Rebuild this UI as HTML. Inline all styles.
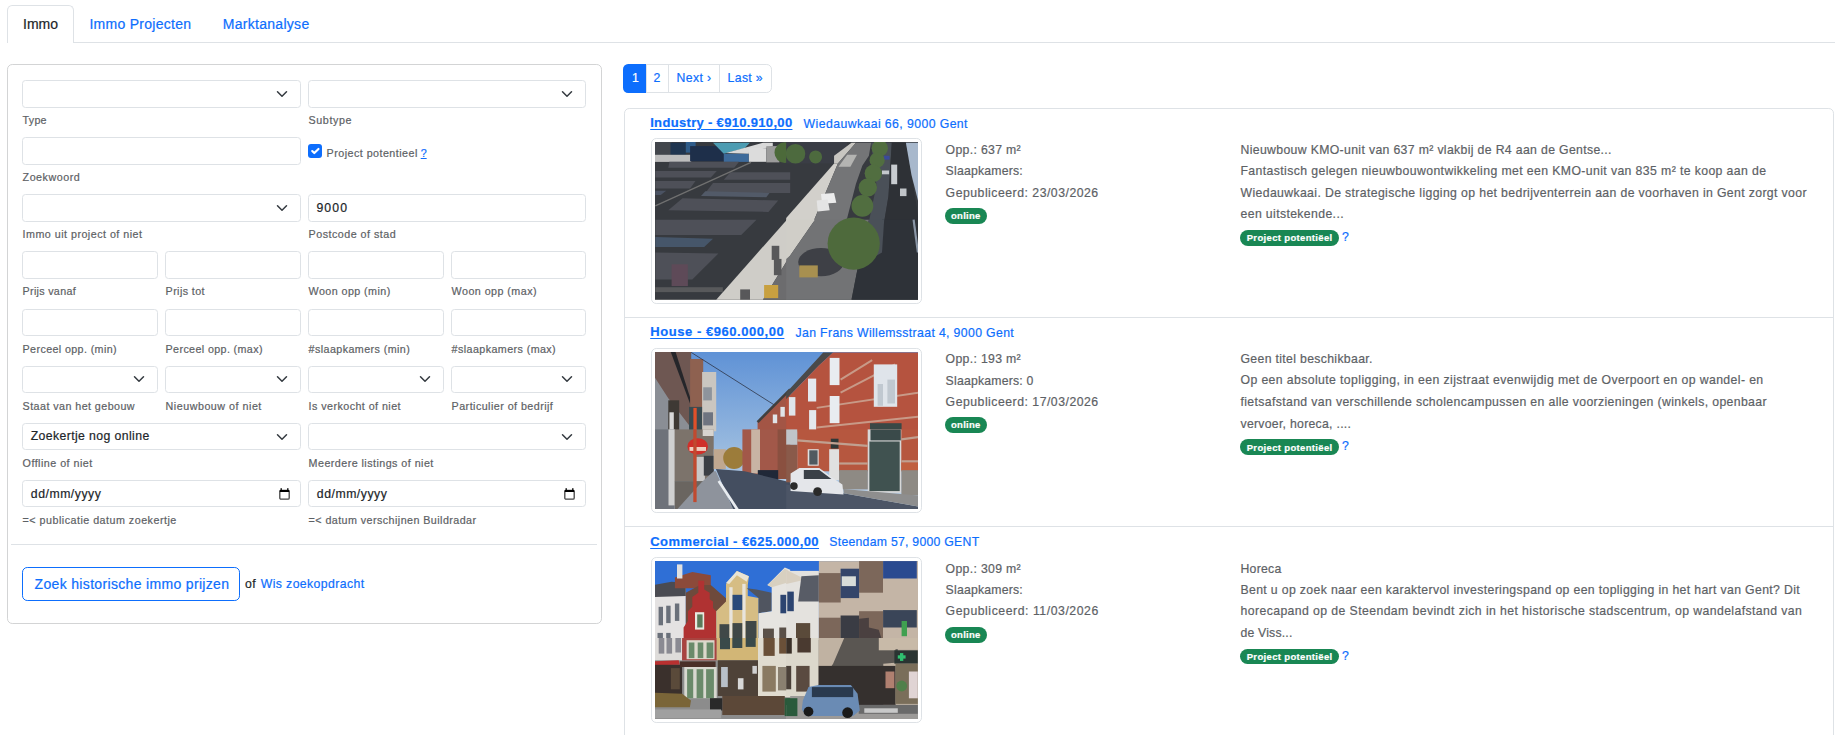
<!DOCTYPE html><html><head><meta charset="utf-8"><style>*{margin:0;padding:0;box-sizing:border-box}
html,body{width:1839px;height:735px;overflow:hidden;background:#fff;font-family:"Liberation Sans",sans-serif}
.t{position:absolute;white-space:nowrap;-webkit-text-stroke:0.2px currentColor}
.b{position:absolute}
.img{overflow:hidden;background:#888}
</style></head><body>
<div class="b" style="left:73.00px;top:42.00px;width:1761.60px;height:1.00px;background:#dee2e6"></div>
<div class="b" style="left:7.00px;top:5.00px;width:66.50px;height:38.00px;border:1px solid #dee2e6;border-bottom:none;border-radius:5.25px 5.25px 0 0;background:#fff"></div>
<div class="t" style="left:23.00px;top:16.10px;font-size:14px;line-height:16.100px;color:#212529;">Immo</div>
<div class="t" style="left:89.40px;top:15.90px;font-size:14px;line-height:16.100px;color:#0d6efd;letter-spacing:0.281px;">Immo Projecten</div>
<div class="t" style="left:222.70px;top:15.90px;font-size:14px;line-height:16.100px;color:#0d6efd;letter-spacing:0.295px;">Marktanalyse</div>
<div class="b" style="left:7.00px;top:64.00px;width:594.80px;height:559.60px;border:1px solid #d3d4d5;border-radius:5.25px"></div>
<div class="b" style="left:22.00px;top:80.00px;width:278.50px;height:27.50px;border:1px solid #dee2e6;border-radius:3.5px;background:#fff"></div>
<svg class="b" style="left:276.00px;top:87.75px" width="12" height="12" viewBox="0 0 16 16"><path d="M2 5l6 6 6-6" fill="none" stroke="#343a40" stroke-width="2" stroke-linecap="round" stroke-linejoin="round"/></svg>
<div class="t" style="left:22.60px;top:114.02px;font-size:10.72px;line-height:12.328px;color:#5d6165;letter-spacing:0.233px;">Type</div>
<div class="b" style="left:308.00px;top:80.00px;width:277.50px;height:27.50px;border:1px solid #dee2e6;border-radius:3.5px;background:#fff"></div>
<svg class="b" style="left:561.00px;top:87.75px" width="12" height="12" viewBox="0 0 16 16"><path d="M2 5l6 6 6-6" fill="none" stroke="#343a40" stroke-width="2" stroke-linecap="round" stroke-linejoin="round"/></svg>
<div class="t" style="left:308.60px;top:114.02px;font-size:10.72px;line-height:12.328px;color:#5d6165;letter-spacing:0.575px;">Subtype</div>
<div class="b" style="left:22.00px;top:137.14px;width:278.50px;height:27.50px;border:1px solid #dee2e6;border-radius:3.5px;background:#fff"></div>
<div class="t" style="left:22.60px;top:171.16px;font-size:10.72px;line-height:12.328px;color:#5d6165;letter-spacing:0.506px;">Zoekwoord</div>
<div class="b" style="left:308.00px;top:144.30px;width:14.00px;height:14.20px;background:#0d6efd;border-radius:3px"></div>
<svg class="b" style="left:308px;top:144.3px" width="14" height="14" viewBox="0 0 20 20"><path d="M6 10l3 3 6-6" fill="none" stroke="#fff" stroke-width="3" stroke-linecap="round" stroke-linejoin="round"/></svg>
<div class="t" style="left:326.60px;top:146.82px;font-size:10.72px;line-height:12.328px;color:#5d6165;letter-spacing:0.465px;">Project potentieel</div>
<div class="t" style="left:420.70px;top:146.82px;font-size:10.72px;line-height:12.328px;color:#0d6efd;text-decoration:underline;">?</div>
<div class="b" style="left:22.00px;top:194.28px;width:278.50px;height:27.50px;border:1px solid #dee2e6;border-radius:3.5px;background:#fff"></div>
<svg class="b" style="left:276.00px;top:202.03px" width="12" height="12" viewBox="0 0 16 16"><path d="M2 5l6 6 6-6" fill="none" stroke="#343a40" stroke-width="2" stroke-linecap="round" stroke-linejoin="round"/></svg>
<div class="t" style="left:22.60px;top:228.30px;font-size:10.72px;line-height:12.328px;color:#5d6165;letter-spacing:0.476px;">Immo uit project of niet</div>
<div class="b" style="left:308.00px;top:194.28px;width:277.50px;height:27.50px;border:1px solid #dee2e6;border-radius:3.5px;background:#fff"></div>
<div class="t" style="left:316.40px;top:200.71px;font-size:12.25px;line-height:14.087px;color:#212529;letter-spacing:1.117px;">9000</div>
<div class="t" style="left:308.60px;top:228.30px;font-size:10.72px;line-height:12.328px;color:#5d6165;letter-spacing:0.480px;">Postcode of stad</div>
<div class="b" style="left:22.00px;top:251.42px;width:135.50px;height:27.50px;border:1px solid #dee2e6;border-radius:3.5px;background:#fff"></div>
<div class="t" style="left:22.60px;top:285.44px;font-size:10.72px;line-height:12.328px;color:#5d6165;letter-spacing:0.300px;">Prijs vanaf</div>
<div class="b" style="left:165.00px;top:251.42px;width:135.50px;height:27.50px;border:1px solid #dee2e6;border-radius:3.5px;background:#fff"></div>
<div class="t" style="left:165.60px;top:285.44px;font-size:10.72px;line-height:12.328px;color:#5d6165;letter-spacing:0.394px;">Prijs tot</div>
<div class="b" style="left:308.00px;top:251.42px;width:135.50px;height:27.50px;border:1px solid #dee2e6;border-radius:3.5px;background:#fff"></div>
<div class="t" style="left:308.60px;top:285.44px;font-size:10.72px;line-height:12.328px;color:#5d6165;letter-spacing:0.431px;">Woon opp (min)</div>
<div class="b" style="left:451.00px;top:251.42px;width:134.50px;height:27.50px;border:1px solid #dee2e6;border-radius:3.5px;background:#fff"></div>
<div class="t" style="left:451.60px;top:285.44px;font-size:10.72px;line-height:12.328px;color:#5d6165;letter-spacing:0.454px;">Woon opp (max)</div>
<div class="b" style="left:22.00px;top:308.56px;width:135.50px;height:27.50px;border:1px solid #dee2e6;border-radius:3.5px;background:#fff"></div>
<div class="t" style="left:22.60px;top:342.58px;font-size:10.72px;line-height:12.328px;color:#5d6165;letter-spacing:0.376px;">Perceel opp. (min)</div>
<div class="b" style="left:165.00px;top:308.56px;width:135.50px;height:27.50px;border:1px solid #dee2e6;border-radius:3.5px;background:#fff"></div>
<div class="t" style="left:165.60px;top:342.58px;font-size:10.72px;line-height:12.328px;color:#5d6165;letter-spacing:0.371px;">Perceel opp. (max)</div>
<div class="b" style="left:308.00px;top:308.56px;width:135.50px;height:27.50px;border:1px solid #dee2e6;border-radius:3.5px;background:#fff"></div>
<div class="t" style="left:308.60px;top:342.58px;font-size:10.72px;line-height:12.328px;color:#5d6165;letter-spacing:0.415px;">#slaapkamers (min)</div>
<div class="b" style="left:451.00px;top:308.56px;width:134.50px;height:27.50px;border:1px solid #dee2e6;border-radius:3.5px;background:#fff"></div>
<div class="t" style="left:451.60px;top:342.58px;font-size:10.72px;line-height:12.328px;color:#5d6165;letter-spacing:0.412px;">#slaapkamers (max)</div>
<div class="b" style="left:22.00px;top:365.70px;width:135.50px;height:27.50px;border:1px solid #dee2e6;border-radius:3.5px;background:#fff"></div>
<svg class="b" style="left:133.00px;top:373.45px" width="12" height="12" viewBox="0 0 16 16"><path d="M2 5l6 6 6-6" fill="none" stroke="#343a40" stroke-width="2" stroke-linecap="round" stroke-linejoin="round"/></svg>
<div class="t" style="left:22.60px;top:399.72px;font-size:10.72px;line-height:12.328px;color:#5d6165;letter-spacing:0.437px;">Staat van het gebouw</div>
<div class="b" style="left:165.00px;top:365.70px;width:135.50px;height:27.50px;border:1px solid #dee2e6;border-radius:3.5px;background:#fff"></div>
<svg class="b" style="left:276.00px;top:373.45px" width="12" height="12" viewBox="0 0 16 16"><path d="M2 5l6 6 6-6" fill="none" stroke="#343a40" stroke-width="2" stroke-linecap="round" stroke-linejoin="round"/></svg>
<div class="t" style="left:165.60px;top:399.72px;font-size:10.72px;line-height:12.328px;color:#5d6165;letter-spacing:0.509px;">Nieuwbouw of niet</div>
<div class="b" style="left:308.00px;top:365.70px;width:135.50px;height:27.50px;border:1px solid #dee2e6;border-radius:3.5px;background:#fff"></div>
<svg class="b" style="left:419.00px;top:373.45px" width="12" height="12" viewBox="0 0 16 16"><path d="M2 5l6 6 6-6" fill="none" stroke="#343a40" stroke-width="2" stroke-linecap="round" stroke-linejoin="round"/></svg>
<div class="t" style="left:308.60px;top:399.72px;font-size:10.72px;line-height:12.328px;color:#5d6165;letter-spacing:0.442px;">Is verkocht of niet</div>
<div class="b" style="left:451.00px;top:365.70px;width:134.50px;height:27.50px;border:1px solid #dee2e6;border-radius:3.5px;background:#fff"></div>
<svg class="b" style="left:561.00px;top:373.45px" width="12" height="12" viewBox="0 0 16 16"><path d="M2 5l6 6 6-6" fill="none" stroke="#343a40" stroke-width="2" stroke-linecap="round" stroke-linejoin="round"/></svg>
<div class="t" style="left:451.60px;top:399.72px;font-size:10.72px;line-height:12.328px;color:#5d6165;letter-spacing:0.452px;">Particulier of bedrijf</div>
<div class="b" style="left:22.00px;top:422.84px;width:278.50px;height:27.50px;border:1px solid #dee2e6;border-radius:3.5px;background:#fff"></div>
<svg class="b" style="left:276.00px;top:430.59px" width="12" height="12" viewBox="0 0 16 16"><path d="M2 5l6 6 6-6" fill="none" stroke="#343a40" stroke-width="2" stroke-linecap="round" stroke-linejoin="round"/></svg>
<div class="t" style="left:30.70px;top:428.71px;font-size:12.25px;line-height:14.087px;color:#212529;letter-spacing:0.395px;">Zoekertje nog online</div>
<div class="t" style="left:22.60px;top:456.86px;font-size:10.72px;line-height:12.328px;color:#5d6165;letter-spacing:0.475px;">Offline of niet</div>
<div class="b" style="left:308.00px;top:422.84px;width:277.50px;height:27.50px;border:1px solid #dee2e6;border-radius:3.5px;background:#fff"></div>
<svg class="b" style="left:561.00px;top:430.59px" width="12" height="12" viewBox="0 0 16 16"><path d="M2 5l6 6 6-6" fill="none" stroke="#343a40" stroke-width="2" stroke-linecap="round" stroke-linejoin="round"/></svg>
<div class="t" style="left:308.60px;top:456.86px;font-size:10.72px;line-height:12.328px;color:#5d6165;letter-spacing:0.454px;">Meerdere listings of niet</div>
<div class="b" style="left:22.00px;top:479.98px;width:278.50px;height:27.50px;border:1px solid #dee2e6;border-radius:3.5px;background:#fff"></div>
<svg class="b" style="left:279.00px;top:487.98px" width="11" height="12" viewBox="0 0 11 12"><path d="M2.2 0.2v2M8.8 0.2v2" stroke="#000" stroke-width="1.4"/><rect x="0.8" y="2.3" width="9.4" height="8.9" rx="1.2" fill="none" stroke="#444" stroke-width="1.3"/><rect x="0.8" y="2" width="9.4" height="2" fill="#000"/></svg>
<div class="t" style="left:30.80px;top:486.71px;font-size:12.25px;line-height:14.087px;color:#212529;letter-spacing:0.528px;">dd/mm/yyyy</div>
<div class="t" style="left:22.60px;top:514.00px;font-size:10.72px;line-height:12.328px;color:#5d6165;letter-spacing:0.486px;">=&lt; publicatie datum zoekertje</div>
<div class="b" style="left:308.00px;top:479.98px;width:277.50px;height:27.50px;border:1px solid #dee2e6;border-radius:3.5px;background:#fff"></div>
<svg class="b" style="left:564.00px;top:487.98px" width="11" height="12" viewBox="0 0 11 12"><path d="M2.2 0.2v2M8.8 0.2v2" stroke="#000" stroke-width="1.4"/><rect x="0.8" y="2.3" width="9.4" height="8.9" rx="1.2" fill="none" stroke="#444" stroke-width="1.3"/><rect x="0.8" y="2" width="9.4" height="2" fill="#000"/></svg>
<div class="t" style="left:316.80px;top:486.71px;font-size:12.25px;line-height:14.087px;color:#212529;letter-spacing:0.528px;">dd/mm/yyyy</div>
<div class="t" style="left:308.60px;top:514.00px;font-size:10.72px;line-height:12.328px;color:#5d6165;letter-spacing:0.438px;">=&lt; datum verschijnen Buildradar</div>
<div class="b" style="left:11.20px;top:544.00px;width:585.80px;height:1.00px;background:#dee2e6"></div>
<div class="b" style="left:22.20px;top:567.10px;width:218.30px;height:33.60px;border:1px solid #0d6efd;border-radius:5.25px"></div>
<div class="t" style="left:34.60px;top:575.70px;font-size:14px;line-height:16.100px;color:#0d6efd;letter-spacing:0.330px;">Zoek historische immo prijzen</div>
<div class="t" style="left:245.00px;top:577.31px;font-size:12.25px;line-height:14.087px;color:#212529;letter-spacing:0.550px;">of</div>
<div class="t" style="left:260.70px;top:577.31px;font-size:12.25px;line-height:14.087px;color:#0d6efd;letter-spacing:0.403px;">Wis zoekopdracht</div>
<div class="b" style="left:623.30px;top:64.00px;width:148.30px;height:28.75px;border:1px solid #dee2e6;border-radius:5.25px"></div>
<div class="b" style="left:623.30px;top:64.00px;width:22.70px;height:28.75px;background:#0d6efd;border-radius:5.25px 0 0 5.25px"></div>
<div class="b" style="left:668.10px;top:64.00px;width:1.00px;height:28.75px;background:#dee2e6"></div>
<div class="b" style="left:718.90px;top:64.00px;width:1.00px;height:28.75px;background:#dee2e6"></div>
<div class="b" style="left:645.50px;top:64.00px;width:1.00px;height:28.75px;background:#dee2e6"></div>
<div class="t" style="left:632.00px;top:70.71px;font-size:12.25px;line-height:14.087px;color:#fff;">1</div>
<div class="t" style="left:653.40px;top:70.71px;font-size:12.25px;line-height:14.087px;color:#0d6efd;">2</div>
<div class="t" style="left:676.50px;top:70.71px;font-size:12.25px;line-height:14.087px;color:#0d6efd;letter-spacing:0.370px;">Next ›</div>
<div class="t" style="left:727.60px;top:70.71px;font-size:12.25px;line-height:14.087px;color:#0d6efd;letter-spacing:0.330px;">Last »</div>
<div class="b" style="left:623.60px;top:107.50px;width:1210.60px;height:692.50px;border:1px solid #dee2e6;border-radius:5.25px 5.25px 0 0"></div>
<div class="t" style="left:650.20px;top:115.82px;font-size:13px;line-height:14.950px;color:#0d6efd;font-weight:700;letter-spacing:0.324px;text-decoration:underline;text-underline-offset:1.5px;">Industry - €910.910,00</div>
<div class="t" style="left:803.60px;top:116.51px;font-size:12.25px;line-height:14.087px;color:#0d6efd;letter-spacing:0.417px;">Wiedauwkaai 66, 9000 Gent</div>
<div class="b" style="left:650.80px;top:138.40px;width:271.60px;height:165.70px;border:1px solid #dee2e6;border-radius:5.25px;background:#fff"></div>
<div class="b img" style="left:654.8px;top:142.30px;width:263.4px;height:157.5px"><svg width="263.4" height="157.5" viewBox="0 0 263.4 157.5" preserveAspectRatio="none" style="display:block;filter:blur(0.45px)"><rect x="0" y="0" width="263.4" height="157.5" fill="#373a3f"/><rect x="-0.8" y="-0.3" width="17.4" height="16.3" fill="#42464c"/><rect x="15.5" y="0.8" width="15.2" height="12.0" fill="#1f3550"/><rect x="30.8" y="-0.3" width="9.8" height="10.9" fill="#2f5c8a"/><rect x="-0.8" y="12.8" width="37.0" height="7.1" fill="#bdbdbd"/><rect x="35.1" y="4.1" width="33.7" height="15.2" fill="#1e2f4a"/><polygon points="58.0,0.8 94.9,0.8 89.5,6.2 73.2,10.6 68.8,11.7" fill="#4c9cb2"/><rect x="68.8" y="11.7" width="25.0" height="8.2" fill="#3d6a9a"/><polygon points="71.0,11.1 108.0,0.8 117.8,0.8 117.8,4.1 93.9,10.6 93.9,11.7" fill="#d9d9d9"/><rect x="93.9" y="6.2" width="17.4" height="13.6" fill="#dcdcdc"/><rect x="111.3" y="4.1" width="13.1" height="16.3" fill="#9c9c9c"/><circle cx="129.8" cy="10.6" r="10.3" fill="#4c6a3a"/><polygon points="14.4,19.8 84.1,19.8 79.2,25.8 13.3,25.8" fill="#4e5058"/><polygon points="0.3,29.1 61.8,29.1 55.8,35.6 0.3,35.6" fill="#4e5058"/><polygon points="75.4,30.2 135.2,30.2 135.2,37.8 68.8,37.8" fill="#4e5058"/><polygon points="0.3,38.9 40.5,38.9 35.1,46.5 0.3,46.5" fill="#4e5058"/><polygon points="58.0,41.1 135.2,41.1 135.2,50.9 50.3,50.9" fill="#4e5058"/><polygon points="0.3,48.7 11.2,48.7 5.7,53.0 0.3,53.0" fill="#4a5262"/><polygon points="50.3,49.2 114.5,50.9 111.3,55.2 46.0,54.1" fill="#525a68"/><polygon points="27.5,56.3 123.2,58.5 113.4,69.9 13.3,68.3" fill="#4e5058"/><line x1="0.3" y1="63.9" x2="96.0" y2="20.4" stroke="#707070" stroke-width="1.31"/><rect x="131.2" y="-0.3" width="61.0" height="21.8" fill="#3a3d45"/><circle cx="140.5" cy="11.7" r="9.8" fill="#4d6a3e"/><circle cx="160.6" cy="14.9" r="6.5" fill="#4d6a3e"/><polygon points="179.1,13.8 196.5,0.8 200.9,0.8 182.9,21.5 179.1,21.5" fill="#c8c6c1"/><polygon points="179.1,21.5 182.9,21.5 158.4,79.7 131.2,79.7 131.2,76.1" fill="#d2d0cb"/><polygon points="200.9,0.8 216.1,0.8 213.9,13.8 207.4,23.6 200.9,42.1 192.2,75.9 190.0,79.7 158.4,79.7 182.9,21.5" fill="#747577"/><polygon points="192.2,12.8 202.0,12.8 195.4,24.7 183.5,24.7" fill="#b4b4b2"/><polygon points="216.1,0.8 236.8,0.8 233.5,54.1 229.2,79.7 213.9,79.7 221.5,43.2" fill="#4a5058"/><polygon points="236.8,0.8 250.9,0.8 261.8,65.0 263.5,79.7 229.2,79.7 233.5,54.1" fill="#2e3136"/><rect x="236.2" y="22.6" width="6.0" height="19.6" fill="#c8ccd0"/><rect x="245.0" y="46.5" width="6.5" height="7.6" fill="#c0c4c8"/><rect x="227.0" y="28.5" width="7.1" height="3.8" fill="#c4c8cc"/><rect x="228.6" y="13.8" width="6.0" height="3.8" fill="#3a4a9a"/><polygon points="250.9,0.8 263.5,0.8 263.5,60.7 256.4,32.4" fill="#a8b8cc"/><circle cx="224.8" cy="6.2" r="8.2" fill="#516e40"/><circle cx="222.1" cy="18.2" r="7.6" fill="#516e40"/><circle cx="218.3" cy="31.3" r="8.7" fill="#516e40"/><circle cx="212.8" cy="45.4" r="9.2" fill="#516e40"/><circle cx="207.4" cy="63.9" r="10.9" fill="#516e40"/><polygon points="166.0,51.9 179.1,50.9 181.3,60.7 167.1,61.7" fill="#ececec"/><polygon points="161.7,58.5 172.6,57.4 174.7,68.3 162.8,69.4" fill="#e4e4e4"/><polygon points="0.3,77.7 101.5,77.7 86.2,92.9 0.3,92.9" fill="#4e5058"/><polygon points="0.3,95.1 58.0,96.7 49.2,104.9 0.3,104.9" fill="#46566a"/><polygon points="0.3,110.4 63.4,111.4 37.3,137.6 0.3,137.6" fill="#4e5058"/><rect x="16.6" y="122.3" width="16.3" height="21.8" fill="#5e4a58"/><rect x="0.3" y="145.2" width="67.5" height="4.9" fill="#58595b"/><polygon points="131.9,77.7 135.2,77.7 135.2,113.6 108.0,157.7 61.2,157.7" fill="#cfcdc8"/><polygon points="135.2,113.6 135.2,157.7 108.0,157.7" fill="#6c6c6e"/><rect x="116.7" y="103.8" width="7.6" height="14.1" fill="#58585a"/><rect x="118.9" y="116.9" width="7.6" height="16.3" fill="#58585a"/><rect x="85.2" y="147.4" width="9.8" height="10.3" fill="#58585a"/><rect x="109.1" y="143.0" width="14.1" height="13.1" fill="#c8a040"/><polygon points="131.2,77.7 160.0,77.7 135.2,113.6 131.2,116.9" fill="#d0cec8"/><polygon points="160.0,77.7 213.9,77.7 203.0,124.5 196.5,157.7 131.2,157.7 131.2,116.9 135.2,113.6" fill="#727375"/><ellipse cx="166.0" cy="120.1" rx="22.8" ry="14.1" fill="#3e4046"/><polygon points="203.0,124.5 227.0,77.7 263.5,77.7 263.5,157.7 196.5,157.7" fill="#2e3238"/><polygon points="213.9,77.7 229.2,77.7 227.0,110.4 203.0,124.5" fill="#4a5058"/><circle cx="198.7" cy="101.6" r="26.1" fill="#4e6a3c"/><rect x="144.3" y="123.4" width="18.5" height="12.0" fill="#a89050"/><line x1="258.6" y1="77.7" x2="262.9" y2="110.4" stroke="#8a96a6" stroke-width="2.18"/></svg></div>
<div class="t" style="left:945.60px;top:142.81px;font-size:12.25px;line-height:14.087px;color:#5d6165;letter-spacing:0.325px;">Opp.: 637 m²</div>
<div class="t" style="left:945.60px;top:164.21px;font-size:12.25px;line-height:14.087px;color:#5d6165;letter-spacing:0.204px;">Slaapkamers:</div>
<div class="t" style="left:945.60px;top:185.51px;font-size:12.25px;line-height:14.087px;color:#5d6165;letter-spacing:0.504px;">Gepubliceerd: 23/03/2026</div>
<div class="b" style="left:945.00px;top:208.00px;width:42.00px;height:16.00px;background:#198754;border-radius:8px"></div>
<div class="t" style="left:951.00px;top:211.05px;font-size:9.5px;line-height:10.925px;color:#fff;font-weight:700;letter-spacing:0.270px;">online</div>
<div class="t" style="left:1240.50px;top:142.81px;font-size:12.25px;line-height:14.087px;color:#5d6165;letter-spacing:0.345px;">Nieuwbouw KMO-unit van 637 m² vlakbij de R4 aan de Gentse...</div>
<div class="t" style="left:1240.50px;top:163.91px;font-size:12.25px;line-height:14.087px;color:#5d6165;letter-spacing:0.392px;">Fantastisch gelegen nieuwbouwontwikkeling met een KMO-unit van 835 m² te koop aan de</div>
<div class="t" style="left:1240.50px;top:185.51px;font-size:12.25px;line-height:14.087px;color:#5d6165;letter-spacing:0.367px;">Wiedauwkaai. De strategische ligging op het bedrijventerrein aan de voorhaven in Gent zorgt voor</div>
<div class="t" style="left:1240.50px;top:207.21px;font-size:12.25px;line-height:14.087px;color:#5d6165;letter-spacing:0.375px;">een uitstekende...</div>
<div class="b" style="left:1240.00px;top:230.00px;width:99.00px;height:15.80px;background:#198754;border-radius:8px"></div>
<div class="t" style="left:1246.70px;top:233.35px;font-size:9.5px;line-height:10.925px;color:#fff;font-weight:700;letter-spacing:0.341px;">Project potentiëel</div>
<div class="t" style="left:1342.00px;top:230.01px;font-size:12.25px;line-height:14.087px;color:#0d6efd;">?</div>
<div class="b" style="left:623.60px;top:316.85px;width:1210.60px;height:1.00px;background:#dee2e6"></div>
<div class="t" style="left:650.20px;top:325.17px;font-size:13px;line-height:14.950px;color:#0d6efd;font-weight:700;letter-spacing:0.558px;text-decoration:underline;text-underline-offset:1.5px;">House - €960.000,00</div>
<div class="t" style="left:795.50px;top:325.86px;font-size:12.25px;line-height:14.087px;color:#0d6efd;letter-spacing:0.360px;">Jan Frans Willemsstraat 4, 9000 Gent</div>
<div class="b" style="left:650.80px;top:347.75px;width:271.60px;height:165.70px;border:1px solid #dee2e6;border-radius:5.25px;background:#fff"></div>
<div class="b img" style="left:654.8px;top:351.65px;width:263.4px;height:157.5px"><svg width="263.4" height="157.5" viewBox="0 0 263.4 157.5" preserveAspectRatio="none" style="display:block;filter:blur(0.45px)"><defs><linearGradient id="sk2" x1="0" y1="0" x2="0" y2="1"><stop offset="0" stop-color="#5f92d6"/><stop offset="0.55" stop-color="#93b6de"/><stop offset="1" stop-color="#c2d3e6"/></linearGradient></defs><rect x="0" y="0" width="263.4" height="157.5" fill="url(#sk2)"/><rect x="-0.8" y="-0.6" width="37.0" height="80.0" fill="#6e5752"/><polygon points="-0.8,24.4 13.3,46.2 35.1,74.5 35.1,79.4 -0.8,79.4" fill="#8a8e95"/><polygon points="15.5,-0.6 20.4,-0.6 36.7,50.5 36.7,55.9" fill="#25262a"/><rect x="13.3" y="48.3" width="10.9" height="31.0" fill="#3e3934"/><rect x="14.4" y="60.3" width="4.4" height="19.0" fill="#d8d8d8"/><rect x="35.1" y="7.0" width="13.1" height="72.4" fill="#8e6150"/><rect x="47.1" y="20.0" width="14.1" height="59.3" fill="#cac6c0"/><rect x="48.2" y="35.3" width="8.7" height="13.1" fill="#8e949c"/><rect x="48.2" y="60.3" width="9.8" height="13.1" fill="#6e7480"/><rect x="34.0" y="54.9" width="13.1" height="24.5" fill="#3a4a50"/><rect x="38.4" y="55.9" width="3.3" height="23.4" fill="#e0502a"/><line x1="36.2" y1="0.4" x2="118.9" y2="52.7" stroke="#2a3040" stroke-width="0.76"/><polygon points="102.6,70.1 135.2,37.4 135.2,79.4 102.6,79.4" fill="#a35545"/><line x1="102.6" y1="70.1" x2="135.2" y2="37.4" stroke="#404040" stroke-width="2.72"/><rect x="125.4" y="54.9" width="4.4" height="9.8" fill="#e0e4e8"/><rect x="117.8" y="62.5" width="4.4" height="8.7" fill="#e0e4e8"/><polygon points="168.2,0.4 178.0,0.4 163.9,13.5 131.2,47.2 131.2,40.7" fill="#4a4a4a"/><polygon points="178.0,0.4 263.5,0.4 263.5,79.4 131.2,79.4 131.2,47.2 163.9,13.5" fill="#b5533f"/><line x1="185.6" y1="27.6" x2="217.2" y2="8.1" stroke="#c89a88" stroke-width="1.96"/><line x1="185.6" y1="40.7" x2="240.1" y2="12.4" stroke="#c89a88" stroke-width="1.96"/><line x1="161.7" y1="55.9" x2="263.5" y2="40.7" stroke="#c89a88" stroke-width="1.96"/><line x1="161.7" y1="75.5" x2="263.5" y2="64.7" stroke="#c89a88" stroke-width="1.96"/><rect x="174.7" y="5.9" width="9.8" height="27.2" fill="#e8ecf0"/><rect x="153.0" y="26.6" width="8.2" height="22.9" fill="#e4e8ee"/><rect x="218.8" y="12.4" width="23.4" height="42.4" fill="#dfe4ea"/><rect x="174.7" y="44.0" width="9.8" height="27.2" fill="#e8ecf0"/><rect x="154.1" y="58.1" width="7.1" height="21.2" fill="#e4e8ee"/><rect x="133.9" y="45.1" width="6.5" height="18.5" fill="#dfe4ea"/><rect x="222.6" y="32.0" width="5.4" height="21.8" fill="#c0c8d0"/><rect x="232.4" y="27.6" width="7.6" height="23.9" fill="#c0c8d0"/><rect x="215.0" y="71.2" width="31.6" height="8.2" fill="#3a4846"/><rect x="-0.8" y="77.4" width="20.4" height="81.0" fill="#6e727a"/><rect x="13.5" y="77.4" width="6.6" height="76.0" fill="#d0d0d0"/><rect x="19.6" y="77.4" width="39.1" height="51.8" fill="#7c736b"/><rect x="41.1" y="104.9" width="8.8" height="25.3" fill="#c8c8c8"/><rect x="48.8" y="103.8" width="9.9" height="19.8" fill="#3a3e44"/><rect x="47.7" y="77.4" width="11.0" height="6.6" fill="#d8d4d0"/><rect x="58.7" y="97.2" width="12.1" height="19.8" fill="#c0a890"/><circle cx="79.1" cy="106.0" r="10.9" fill="#9c7c3a"/><rect x="87.4" y="77.4" width="47.8" height="49.6" fill="#a25849"/><rect x="96.2" y="77.4" width="8.8" height="44.1" fill="#c8b4a4"/><rect x="122.6" y="77.4" width="12.6" height="49.6" fill="#8a5040"/><rect x="102.8" y="118.1" width="20.4" height="10.5" fill="#202838"/><rect x="19.6" y="129.1" width="30.3" height="29.2" fill="#6a6560"/><polygon points="58.7,119.2 60.9,119.2 78.6,158.4 21.2,158.4 46.6,130.2" fill="#8e939c"/><polygon points="60.9,117.0 89.6,119.2 135.2,130.2 135.2,158.4 78.6,158.4" fill="#444e60"/><line x1="63.7" y1="129.1" x2="83.0" y2="158.4" stroke="#e8ecf0" stroke-width="2.72"/><ellipse cx="42.7" cy="94.4" rx="10.3" ry="8.2" fill="#d0302a"/><rect x="34.5" y="95.0" width="16.5" height="3.9" fill="#f0d0c0"/><rect x="38.3" y="77.4" width="3.3" height="72.7" fill="#c04a30"/><rect x="142.2" y="77.4" width="121.2" height="41.9" fill="#b6573f"/><rect x="131.2" y="77.4" width="11.0" height="15.4" fill="#c0c4c8"/><rect x="131.2" y="92.8" width="11.0" height="37.5" fill="#8a5a4a"/><rect x="152.7" y="97.2" width="11.0" height="16.5" fill="#e0e0e0"/><rect x="154.3" y="98.3" width="8.3" height="14.3" fill="#505a60"/><rect x="174.2" y="97.2" width="9.9" height="30.9" fill="#e0e0e0"/><rect x="175.8" y="86.7" width="7.7" height="9.9" fill="#303838"/><rect x="212.7" y="77.4" width="33.6" height="63.4" fill="#d8d8d8"/><rect x="214.4" y="89.5" width="30.3" height="49.6" fill="#405250"/><rect x="215.5" y="77.4" width="30.3" height="11.0" fill="#3a4a4a"/><rect x="184.1" y="118.1" width="28.7" height="19.3" fill="#8e8a84"/><rect x="246.4" y="118.1" width="17.1" height="25.3" fill="#8e8a84"/><rect x="246.4" y="110.4" width="17.1" height="7.7" fill="#c06040"/><line x1="142.2" y1="88.4" x2="212.7" y2="93.9" stroke="#c0a090" stroke-width="2.18"/><line x1="184.1" y1="111.5" x2="212.7" y2="111.5" stroke="#c0a090" stroke-width="2.18"/><line x1="246.4" y1="87.3" x2="263.4" y2="85.1" stroke="#c0a090" stroke-width="2.18"/><line x1="246.4" y1="109.3" x2="263.4" y2="109.3" stroke="#c0a090" stroke-width="2.18"/><polygon points="131.2,132.5 188.5,141.3 263.4,154.5 263.4,158.4 131.2,158.4" fill="#4c5566"/><polygon points="188.5,136.9 263.4,143.5 263.4,154.5 188.5,141.3" fill="#8e8e8e"/><polygon points="135.6,121.4 144.4,115.9 164.3,115.9 177.5,125.8 187.4,132.5 188.5,142.4 135.6,139.1" fill="#e4e6ea"/><polygon points="148.8,118.1 164.3,118.1 176.4,126.9 148.8,126.9" fill="#3a4048"/><circle cx="138.9" cy="134.1" r="3.8" fill="#2a2a2a"/><circle cx="162.6" cy="139.6" r="4.4" fill="#2a2a2a"/></svg></div>
<div class="t" style="left:945.60px;top:352.16px;font-size:12.25px;line-height:14.087px;color:#5d6165;letter-spacing:0.325px;">Opp.: 193 m²</div>
<div class="t" style="left:945.60px;top:373.56px;font-size:12.25px;line-height:14.087px;color:#5d6165;letter-spacing:0.196px;">Slaapkamers: 0</div>
<div class="t" style="left:945.60px;top:394.86px;font-size:12.25px;line-height:14.087px;color:#5d6165;letter-spacing:0.504px;">Gepubliceerd: 17/03/2026</div>
<div class="b" style="left:945.00px;top:417.35px;width:42.00px;height:16.00px;background:#198754;border-radius:8px"></div>
<div class="t" style="left:951.00px;top:420.40px;font-size:9.5px;line-height:10.925px;color:#fff;font-weight:700;letter-spacing:0.270px;">online</div>
<div class="t" style="left:1240.50px;top:352.16px;font-size:12.25px;line-height:14.087px;color:#5d6165;letter-spacing:0.332px;">Geen titel beschikbaar.</div>
<div class="t" style="left:1240.50px;top:373.26px;font-size:12.25px;line-height:14.087px;color:#5d6165;letter-spacing:0.391px;">Op een absolute topligging, in een zijstraat evenwijdig met de Overpoort en op wandel- en</div>
<div class="t" style="left:1240.50px;top:394.86px;font-size:12.25px;line-height:14.087px;color:#5d6165;letter-spacing:0.364px;">fietsafstand van verschillende scholencampussen en alle voorzieningen (winkels, openbaar</div>
<div class="t" style="left:1240.50px;top:416.56px;font-size:12.25px;line-height:14.087px;color:#5d6165;letter-spacing:0.278px;">vervoer, horeca, ....</div>
<div class="b" style="left:1240.00px;top:439.35px;width:99.00px;height:15.80px;background:#198754;border-radius:8px"></div>
<div class="t" style="left:1246.70px;top:442.70px;font-size:9.5px;line-height:10.925px;color:#fff;font-weight:700;letter-spacing:0.341px;">Project potentiëel</div>
<div class="t" style="left:1342.00px;top:439.36px;font-size:12.25px;line-height:14.087px;color:#0d6efd;">?</div>
<div class="b" style="left:623.60px;top:526.20px;width:1210.60px;height:1.00px;background:#dee2e6"></div>
<div class="t" style="left:650.20px;top:534.52px;font-size:13px;line-height:14.950px;color:#0d6efd;font-weight:700;letter-spacing:0.441px;text-decoration:underline;text-underline-offset:1.5px;">Commercial - €625.000,00</div>
<div class="t" style="left:829.30px;top:535.21px;font-size:12.25px;line-height:14.087px;color:#0d6efd;letter-spacing:0.260px;">Steendam 57, 9000 GENT</div>
<div class="b" style="left:650.80px;top:557.10px;width:271.60px;height:165.70px;border:1px solid #dee2e6;border-radius:5.25px;background:#fff"></div>
<div class="b img" style="left:654.8px;top:561.00px;width:263.4px;height:157.5px"><svg width="263.4" height="157.5" viewBox="0 0 263.4 157.5" preserveAspectRatio="none" style="display:block;filter:blur(0.45px)"><rect x="0" y="0" width="263.4" height="157.5" fill="#2f6fd6"/><rect x="-0.8" y="77.0" width="136.0" height="82.0" fill="#8c8c8c"/><rect x="131.2" y="77.0" width="134.0" height="82.0" fill="#9c9a98"/><rect x="-0.8" y="24.0" width="31.6" height="55.0" fill="#e4e2e2"/><polygon points="-0.8,24.0 16.6,20.8 30.8,21.9 30.8,34.9 -0.8,36.0" fill="#4a4b52"/><rect x="3.6" y="45.8" width="4.4" height="18.5" fill="#6a707a"/><rect x="11.2" y="44.7" width="4.4" height="17.4" fill="#6a707a"/><rect x="19.9" y="42.5" width="4.4" height="17.4" fill="#6a707a"/><rect x="2.5" y="71.9" width="5.4" height="7.1" fill="#6a707a"/><rect x="11.2" y="71.9" width="4.4" height="7.1" fill="#6a707a"/><polygon points="19.9,16.4 37.3,11.0 55.8,14.2 55.8,27.3 19.9,27.3" fill="#8c4a3a"/><rect x="22.0" y="3.4" width="5.4" height="14.1" fill="#e0e0e0"/><polygon points="44.9,24.0 55.8,24.0 72.1,38.2 71.0,48.0 61.2,50.2 61.2,79.0 30.8,79.0 30.8,31.7" fill="#6e4a3c"/><polygon points="43.3,19.7 49.2,19.7 49.2,28.4 54.7,31.7 54.7,38.2 58.0,40.4 58.0,46.9 61.2,50.2 61.2,79.0 28.6,79.0 28.6,66.5 32.9,60.0 32.9,50.2 37.3,45.8 37.3,36.0 43.3,31.7" fill="#b03232"/><rect x="40.0" y="51.2" width="9.2" height="17.4" fill="#e8e8e0"/><rect x="42.2" y="53.4" width="5.4" height="13.1" fill="#5a7a5a"/><polygon points="61.2,50.2 71.0,40.4 71.0,22.9 81.9,9.9 93.9,15.3 92.8,24.0 92.8,34.9 103.6,37.1 103.6,79.0 61.2,79.0" fill="#d6bd84"/><polygon points="71.0,21.9 81.9,9.9 93.9,15.3 91.7,20.8 81.9,14.2 74.3,22.9" fill="#eae4d4"/><rect x="74.3" y="26.2" width="3.3" height="52.8" fill="#e8e4dc"/><rect x="87.3" y="22.9" width="3.3" height="56.1" fill="#e8e4dc"/><rect x="77.5" y="33.8" width="9.8" height="15.2" fill="#2a4a7a"/><rect x="64.5" y="63.2" width="9.8" height="15.8" fill="#404848"/><rect x="77.5" y="62.1" width="9.8" height="16.9" fill="#404848"/><rect x="90.6" y="60.0" width="10.9" height="19.0" fill="#404848"/><polygon points="91.7,27.3 101.5,28.4 116.7,31.7 116.7,50.2 103.6,52.3 103.6,37.1" fill="#505560"/><polygon points="103.6,52.3 116.7,50.2 116.7,26.2 112.4,24.0 129.8,6.6 135.2,8.8 135.2,79.0 103.6,79.0" fill="#e6e4e0"/><polygon points="112.4,24.0 129.8,7.7 135.2,11.0 135.2,20.8 116.7,26.2" fill="#d8d0c0"/><rect x="125.4" y="33.8" width="9.8" height="18.5" fill="#2c4470"/><rect x="108.0" y="67.6" width="10.9" height="11.4" fill="#5a5048"/><rect x="124.3" y="66.5" width="10.9" height="12.5" fill="#5a5048"/><rect x="131.2" y="9.9" width="32.7" height="69.1" fill="#e4e2de"/><polygon points="131.2,8.8 150.8,18.6 131.2,22.9" fill="#d8cfc0"/><polygon points="146.4,15.3 163.9,14.2 163.9,40.4 143.2,40.4" fill="#585c66"/><rect x="132.3" y="30.6" width="6.5" height="19.6" fill="#2c4470"/><rect x="141.0" y="62.1" width="14.2" height="16.9" fill="#5a4a3a"/><rect x="163.9" y="0.1" width="99.6" height="78.9" fill="#c4b5a6"/><rect x="163.9" y="12.1" width="21.8" height="29.4" fill="#7c675a"/><rect x="204.1" y="0.1" width="23.9" height="31.6" fill="#7c675a"/><rect x="163.9" y="56.7" width="21.8" height="22.3" fill="#7c675a"/><rect x="204.1" y="50.2" width="23.9" height="28.8" fill="#7c675a"/><rect x="185.6" y="7.7" width="18.5" height="29.4" fill="#34456a"/><rect x="186.7" y="15.3" width="14.2" height="9.8" fill="#d8dcd8"/><rect x="228.1" y="0.1" width="33.7" height="17.4" fill="#2a4a90"/><rect x="228.1" y="49.1" width="33.7" height="17.4" fill="#3a4558"/><rect x="185.6" y="54.5" width="18.5" height="24.5" fill="#3a3c44"/><polygon points="204.1,57.8 213.9,56.7 213.9,66.5 223.7,68.7 227.0,79.0 204.1,79.0" fill="#4a4040"/><rect x="246.6" y="60.0" width="5.4" height="15.2" fill="#40a050"/><rect x="-0.8" y="77.0" width="27.9" height="22.3" fill="#dedcda"/><rect x="3.7" y="77.0" width="5.6" height="15.6" fill="#8a8a92"/><rect x="11.5" y="77.0" width="5.6" height="15.6" fill="#8a8a92"/><rect x="20.4" y="77.0" width="5.6" height="14.5" fill="#8a8a92"/><polygon points="-0.8,100.4 23.7,99.3 24.9,103.8 -0.8,104.3" fill="#b83030"/><rect x="-0.8" y="103.8" width="27.9" height="31.2" fill="#3a302c"/><rect x="15.9" y="107.1" width="8.9" height="21.2" fill="#5a4a3a"/><rect x="27.1" y="77.0" width="34.6" height="22.3" fill="#a84440"/><rect x="31.6" y="79.2" width="27.9" height="19.0" fill="#dcd8cc"/><rect x="33.8" y="81.5" width="5.6" height="15.6" fill="#6a8a6a"/><rect x="42.7" y="81.5" width="5.6" height="15.6" fill="#6a8a6a"/><rect x="51.6" y="81.5" width="6.7" height="15.6" fill="#6a8a6a"/><rect x="24.9" y="100.4" width="35.7" height="5.6" fill="#4a3028"/><rect x="29.3" y="106.0" width="32.4" height="31.2" fill="#d8d8d0"/><rect x="32.1" y="108.2" width="6.1" height="29.0" fill="#6a8a6a"/><rect x="41.6" y="108.2" width="6.7" height="29.0" fill="#6a8a6a"/><rect x="51.1" y="108.2" width="7.8" height="29.0" fill="#6a8a6a"/><rect x="61.7" y="77.0" width="41.3" height="22.3" fill="#d2b676"/><rect x="65.0" y="77.0" width="10.0" height="11.2" fill="#3a4a4a"/><rect x="77.3" y="77.0" width="10.0" height="10.0" fill="#3a4a4a"/><rect x="90.7" y="77.0" width="10.0" height="8.9" fill="#3a4a4a"/><rect x="62.8" y="99.3" width="40.2" height="35.7" fill="#4e4238"/><rect x="66.1" y="106.0" width="6.7" height="20.1" fill="#b8c0c8"/><rect x="82.9" y="117.2" width="5.6" height="11.2" fill="#d8d8d8"/><rect x="97.4" y="104.9" width="4.5" height="7.8" fill="#d0d0d0"/><rect x="103.0" y="77.0" width="32.2" height="59.1" fill="#e0dcd0"/><rect x="108.5" y="77.0" width="11.2" height="17.9" fill="#6a5038"/><rect x="124.2" y="77.0" width="11.0" height="15.6" fill="#6a5038"/><rect x="107.4" y="104.9" width="13.4" height="25.7" fill="#8a7a62"/><rect x="123.0" y="106.0" width="12.2" height="23.4" fill="#8a8070"/><polygon points="-0.8,131.7 27.1,132.8 36.0,139.5 34.9,146.2 -0.8,146.2" fill="#7a6538"/><rect x="67.3" y="135.0" width="62.5" height="19.0" fill="#5c4838"/><rect x="55.0" y="137.2" width="12.3" height="12.3" fill="#2a2a2a"/><rect x="-0.8" y="148.4" width="66.9" height="8.9" fill="#a0a0a0"/><rect x="129.7" y="137.2" width="5.5" height="17.9" fill="#2a5a3a"/><rect x="131.2" y="77.0" width="32.4" height="58.0" fill="#dcd8cc"/><rect x="131.2" y="77.0" width="5.6" height="15.6" fill="#3a3028"/><rect x="142.4" y="77.0" width="13.4" height="14.5" fill="#4a3a30"/><rect x="141.2" y="104.9" width="13.4" height="25.7" fill="#5a4a40"/><rect x="131.2" y="104.9" width="5.0" height="23.4" fill="#4a4038"/><rect x="163.6" y="77.0" width="99.3" height="66.9" fill="#c0b2a2"/><polygon points="163.6,123.9 178.1,102.7 189.2,77.0 242.8,77.0 242.8,101.5 228.3,102.7 228.3,143.9 163.6,143.9" fill="#5a5652"/><rect x="223.8" y="77.0" width="16.7" height="12.3" fill="#c8baa8"/><rect x="239.4" y="77.0" width="23.4" height="11.2" fill="#c8baa8"/><rect x="163.6" y="104.9" width="77.0" height="39.0" fill="#35302e"/><rect x="239.4" y="89.3" width="23.4" height="13.4" fill="#2a3432"/><rect x="242.8" y="94.3" width="7.8" height="3.3" fill="#30c070"/><rect x="245.0" y="92.1" width="3.3" height="7.8" fill="#30c070"/><rect x="240.5" y="102.7" width="22.3" height="40.2" fill="#7a6e5a"/><rect x="253.9" y="110.5" width="8.9" height="26.8" fill="#e0d4d4"/><rect x="230.5" y="110.5" width="8.9" height="16.7" fill="#b08070"/><circle cx="246.7" cy="125.0" r="5.4" fill="#50804a"/><polygon points="131.2,143.9 262.9,143.9 262.9,159.0 131.2,159.0" fill="#9c9a98"/><rect x="203.7" y="143.9" width="59.1" height="8.9" fill="#6a6a6a"/><rect x="209.3" y="147.3" width="33.5" height="4.5" fill="#c8c8c8"/><polygon points="147.9,139.5 153.5,126.1 163.6,123.9 195.9,123.9 202.6,132.8 204.8,149.5 198.1,155.1 151.3,155.1 146.8,148.4" fill="#6a8bb4"/><rect x="156.9" y="126.1" width="41.3" height="10.0" fill="#2a3a4e"/><circle cx="153.5" cy="150.6" r="4.9" fill="#1a1a1a"/><circle cx="192.6" cy="151.7" r="5.4" fill="#1a1a1a"/><rect x="131.2" y="137.2" width="11.2" height="17.9" fill="#2a5a3c"/></svg></div>
<div class="t" style="left:945.60px;top:561.51px;font-size:12.25px;line-height:14.087px;color:#5d6165;letter-spacing:0.325px;">Opp.: 309 m²</div>
<div class="t" style="left:945.60px;top:582.91px;font-size:12.25px;line-height:14.087px;color:#5d6165;letter-spacing:0.204px;">Slaapkamers:</div>
<div class="t" style="left:945.60px;top:604.21px;font-size:12.25px;line-height:14.087px;color:#5d6165;letter-spacing:0.546px;">Gepubliceerd: 11/03/2026</div>
<div class="b" style="left:945.00px;top:626.70px;width:42.00px;height:16.00px;background:#198754;border-radius:8px"></div>
<div class="t" style="left:951.00px;top:629.75px;font-size:9.5px;line-height:10.925px;color:#fff;font-weight:700;letter-spacing:0.270px;">online</div>
<div class="t" style="left:1240.50px;top:561.51px;font-size:12.25px;line-height:14.087px;color:#5d6165;letter-spacing:0.250px;">Horeca</div>
<div class="t" style="left:1240.50px;top:582.61px;font-size:12.25px;line-height:14.087px;color:#5d6165;letter-spacing:0.352px;">Bent u op zoek naar een karaktervol investeringspand op een topligging in het hart van Gent? Dit</div>
<div class="t" style="left:1240.50px;top:604.21px;font-size:12.25px;line-height:14.087px;color:#5d6165;letter-spacing:0.407px;">horecapand op de Steendam bevindt zich in het historische stadscentrum, op wandelafstand van</div>
<div class="t" style="left:1240.50px;top:625.91px;font-size:12.25px;line-height:14.087px;color:#5d6165;letter-spacing:0.183px;">de Viss...</div>
<div class="b" style="left:1240.00px;top:648.70px;width:99.00px;height:15.80px;background:#198754;border-radius:8px"></div>
<div class="t" style="left:1246.70px;top:652.05px;font-size:9.5px;line-height:10.925px;color:#fff;font-weight:700;letter-spacing:0.341px;">Project potentiëel</div>
<div class="t" style="left:1342.00px;top:648.71px;font-size:12.25px;line-height:14.087px;color:#0d6efd;">?</div>
</body></html>
